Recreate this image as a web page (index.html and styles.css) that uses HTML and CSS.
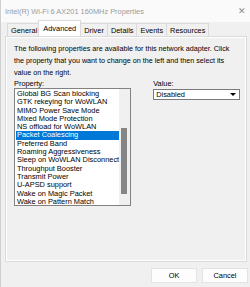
FILE: index.html
```html
<!DOCTYPE html>
<html lang="en">
<head>
  <meta charset="UTF-8">
  <title>Intel(R) Wi-Fi 6 AX201 160MHz Properties</title>
  <link rel="stylesheet" href="styles.css">
</head>
<body>

<div class="window">
  <div class="titlebar">
    <span class="title">Intel(R) Wi-Fi 6 AX201 160MHz Properties</span>
    <span class="close">&#x2715;</span>
  </div>

  <div class="tabs">
    <span class="tab">General</span>
    <span class="tab active">Advanced</span>
    <span class="tab">Driver</span>
    <span class="tab">Details</span>
    <span class="tab">Events</span>
    <span class="tab">Resources</span>
  </div>

  <div class="panel">
    <p class="intro">The following properties are available for this network adapter. Click the property that you want to change on the left and then select its value on the right.</p>

    <div class="fields">
      <div class="col-property">
        <label>Property:</label>
        <div class="listbox">
          <ul class="items">
            <li>Global BG Scan blocking</li>
            <li>GTK rekeying for WoWLAN</li>
            <li>MIMO Power Save Mode</li>
            <li>Mixed Mode Protection</li>
            <li>NS offload for WoWLAN</li>
            <li class="selected">Packet Coalescing</li>
            <li>Preferred Band</li>
            <li>Roaming Aggressiveness</li>
            <li>Sleep on WoWLAN Disconnect</li>
            <li>Throughput Booster</li>
            <li>Transmit Power</li>
            <li>U-APSD support</li>
            <li>Wake on Magic Packet</li>
            <li>Wake on Pattern Match</li>
          </ul>
          <div class="scrollbar"><div class="thumb"></div></div>
        </div>
      </div>

      <div class="col-value">
        <label>Value:</label>
        <div class="select">
          <span>Disabled</span>
          <span class="arrow"></span>
        </div>
      </div>
    </div>
  </div>

  <div class="buttons">
    <button class="btn">OK</button>
    <button class="btn">Cancel</button>
  </div>
</div>

</body>
</html>
```

FILE: styles.css
```css
/* Ventana general */
body {
  margin: 0;
  background: #f0f0f0;
  font-family: "Liberation Sans", Arial, sans-serif;
  color: #000;
}

.window {
  width: 250px;
  height: 287px;
  box-sizing: border-box;
  border-left: 1px solid #cfcfcf;
  display: flex;
  flex-direction: column;
}

/* Barra de titulo */
.titlebar {
  height: 22px;
  background: #fafafa;
  display: flex;
  align-items: center;
  justify-content: space-between;
  padding: 0 4px 0 4px;
}

.title {
  font-size: 7.4px;
  color: #9a9a9a;
}

.close {
  font-size: 9px;
  color: #8a8a8a;
}

/* Pestañas */
.tabs {
  display: flex;
  align-items: flex-end;
  padding-left: 6px;
  height: 14px;
}

.tab {
  font-size: 7.4px;
  padding: 2px 3px 1px;
  border: 1px solid #dadada;
  border-bottom: none;
  margin-right: -1px;
  background: #f0f0f0;
}

.tab.active {
  background: #fff;
  padding: 3px 4px 3px;
  margin: 0 -1px 0 -2px;
  position: relative;
  z-index: 1;
}

/* Panel principal */
.panel {
  margin: 0 3px 0 4px;
  height: 226px;
  box-sizing: border-box;
  border: 1px solid #dadada;
  box-shadow: inset 0 0 0 1px #fff;
  padding: 6px 8px 0 8px;
}

.intro {
  margin: 0;
  font-size: 7.2px;
  line-height: 12px;
}

.fields {
  display: flex;
  margin-top: 0;
}

label {
  display: block;
  font-size: 7.4px;
  line-height: 10px;
  height: 10px;
}

.col-property {
  width: 118px;
}

.col-value {
  margin-left: 22px;
}

.listbox {
  margin-top: -1px;
  height: 118px;
  box-sizing: border-box;
  border: 1px solid #828282;
  background: #fff;
  display: flex;
}

.items {
  list-style: none;
  margin: 0;
  padding: 1px 0 0 1px;
  flex: 1;
}

.items li {
  font-size: 7.4px;
  line-height: 8.3px;
  height: 8.3px;
  padding-left: 1px;
  white-space: nowrap;
}

.items li.selected {
  background: #0078d7;
  color: #fff;
}

.scrollbar {
  width: 11px;
  background: #f0f0f0;
  display: flex;
  flex-direction: column;
  justify-content: flex-end;
  padding: 0 3px 11px 2px;
  box-sizing: border-box;
}

.thumb {
  height: 66px;
  background: #858585;
}

/* Lista desplegable */
.select {
  width: 87px;
  height: 11px;
  box-sizing: border-box;
  border: 1px solid #7a7a7a;
  background: #fff;
  display: flex;
  align-items: center;
  justify-content: space-between;
  font-size: 7.4px;
  padding-left: 2px;
}

.arrow {
  width: 0;
  height: 0;
  border-left: 3px solid transparent;
  border-right: 3px solid transparent;
  border-top: 3px solid #000;
  margin-right: 3px;
}

/* Botones */
.buttons {
  display: flex;
  justify-content: flex-end;
  gap: 5px;
  padding: 6px 2px 0 0;
}

.btn {
  width: 46px;
  height: 15px;
  border: 1px solid #e3e3e3;
  background: #fdfdfd;
  font-family: "Liberation Sans", Arial, sans-serif;
  font-size: 7.4px;
  padding: 0;
}
```
